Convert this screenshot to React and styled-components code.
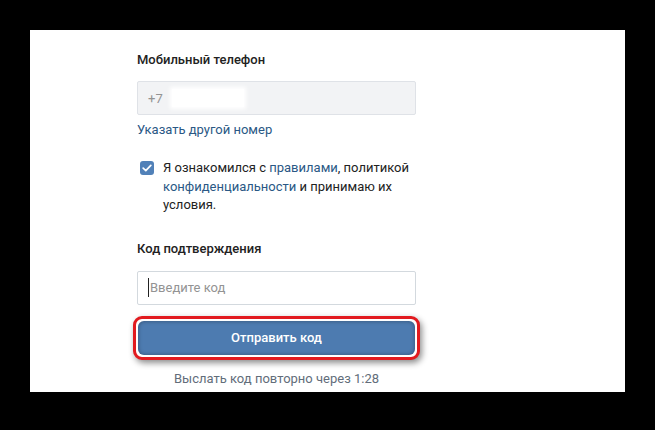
import React from 'react'
import styled, { createGlobalStyle } from 'styled-components'

const Global = createGlobalStyle`
  html, body {
    margin: 0;
    background: #000;
  }
  body {
    font-family: Roboto, "Liberation Sans", Arial, sans-serif;
    font-size: 13px;
    -webkit-font-smoothing: antialiased;
  }
`

const Page = styled.div`
  padding: 30px 30px 38px 30px;
`

const Panel = styled.div`
  width: 595px;
  height: 362px;
  background: #fff;
  box-sizing: border-box;
  padding: 21px 0 0 107px;
`

const Column = styled.div`
  width: 279px;
  display: flex;
  flex-direction: column;
`

const Label = styled.div`
  color: #222;
  font-weight: 500;
  line-height: 18px;
  margin-top: ${p => p.$top || 0}px;
`

const Field = styled.div`
  height: 34px;
  box-sizing: border-box;
  border: 1px solid ${p => (p.$disabled ? '#dfe2e7' : '#d3d9de')};
  background: ${p => (p.$disabled ? '#f2f3f5' : '#fff')};
  border-radius: 2px;
  margin-top: ${p => p.$top || 0}px;
  padding: 0 10px;
  display: flex;
  align-items: center;
  color: #939393;
  font-size: 13px;
`

const Hidden = styled.span`
  display: inline-block;
  width: 72px;
  height: 18px;
  margin-left: 9px;
  background: #fff;
  box-shadow: 0 0 4px 2px #fff;
`

const Caret = styled.span`
  display: inline-block;
  width: 1px;
  height: 19px;
  background: #222;
  margin-right: 1px;
`

const Link = styled.a`
  color: #2a5885;
  text-decoration: none;
`

const LinkRow = styled.div`
  margin-top: 6px;
  line-height: 18px;
`

const Agree = styled.div`
  display: flex;
  gap: 9px;
  margin-top: 20px;
  padding-left: 3px;
`

const Check = styled.span`
  flex: none;
  width: 14px;
  height: 14px;
  margin-top: 2px;
  border-radius: 3px;
  background: #5181b8;
  display: flex;
  align-items: center;
  justify-content: center;
`

const AgreeText = styled.div`
  width: 252px;
  color: #222;
  line-height: 18.5px;
`

const Outline = styled.div`
  margin: 11px -4px 0 -4px;
  border: 3px solid #e21a1f;
  border-radius: 9px;
  padding: 2px;
  background: #fff;
  box-shadow: 2px 3px 6px rgba(0, 0, 0, 0.45);
`

const Button = styled.button`
  width: 100%;
  height: 34px;
  border: 0;
  border-radius: 6px;
  background: #4d7bb0;
  box-shadow: inset 0 0 4px rgba(0, 0, 0, 0.35);
  color: #fff;
  font-family: inherit;
  font-size: 13px;
  font-weight: 500;
  display: block;
`

const Resend = styled.div`
  margin-top: 10px;
  text-align: center;
  color: #626d7a;
  line-height: 18px;
`

export default function App() {
  return (
    <>
      <Global />
      <Page>
        <Panel>
          <Column>
            <Label>Мобильный телефон</Label>
            <Field $disabled $top={12}>
              +7<Hidden />
            </Field>
            <LinkRow>
              <Link>Указать другой номер</Link>
            </LinkRow>
            <Agree>
              <Check>
                <svg width="10" height="8" viewBox="0 0 10 8">
                  <path d="M1.2 4.2 L3.8 6.6 L8.8 1.4" fill="none" stroke="#fff" strokeWidth="1.7" strokeLinecap="round" strokeLinejoin="round" />
                </svg>
              </Check>
              <AgreeText>
                Я ознакомился с <Link>правилами</Link>, политикой{' '}
                <Link>конфиденциальности</Link> и принимаю их условия.
              </AgreeText>
            </Agree>
            <Label $top={25}>Код подтверждения</Label>
            <Field $top={13}>
              <Caret />Введите код
            </Field>
            <Outline>
              <Button>Отправить код</Button>
            </Outline>
            <Resend>Выслать код повторно через 1:28</Resend>
          </Column>
        </Panel>
      </Page>
    </>
  )
}
